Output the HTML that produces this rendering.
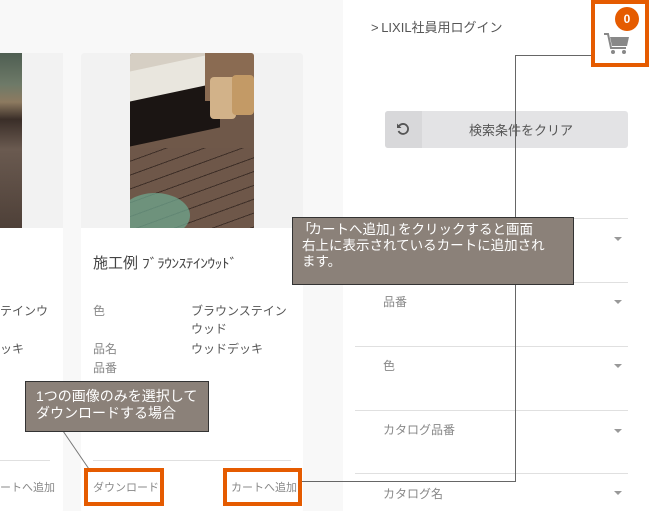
<!DOCTYPE html>
<html><head><meta charset="utf-8"><style>
*{margin:0;padding:0;box-sizing:border-box}
body{width:650px;height:511px;overflow:hidden;background:#fff;font-family:"Liberation Sans","Noto Sans CJK JP",sans-serif;position:relative;color:#555}
.abs{position:absolute}
.leftbg{left:0;top:0;width:343px;height:511px;background:#f8f8f8}
.card{background:#fff;border-radius:3px}
.imgbg{background:#f2f2f2}
.t{font-size:12px;color:#888;position:absolute;white-space:nowrap}
.v{font-size:12px;color:#555;position:absolute;white-space:nowrap}
.div{position:absolute;height:1px;background:#e0e0e0}
.arr{position:absolute;width:0;height:0;border-left:4px solid transparent;border-right:4px solid transparent;border-top:4px solid #999}
.tip{position:absolute;background:#8b8179;border:1px solid #333;color:#fff;font-size:13.5px;line-height:16px;padding:4px 0 0 9px}
.ob{position:absolute;border:4px solid #e55b00;background:transparent}
</style></head><body>
<div class="abs leftbg"></div>
<!-- card 1 -->
<div class="abs card" style="left:-10px;top:53px;width:73px;height:460px"></div>
<div class="abs imgbg" style="left:0;top:53px;width:63px;height:175px"></div>
<div class="abs" style="left:0;top:53px;width:22px;height:175px;background:linear-gradient(180deg,#4e5e52 0%,#6e7a68 18%,#8d7a60 28%,#3a2e28 38%,#6a5a50 55%,#4e4038 100%)"></div>
<div class="v" style="left:0;top:302px">テインウ</div>
<div class="v" style="left:0;top:340px">ッキ</div>
<div class="div" style="left:0;top:460px;width:50px"></div>
<div class="t" style="left:0;top:479px;font-size:11px">ートへ追加</div>
<!-- card 2 -->
<div class="abs card" style="left:81px;top:53px;width:222px;height:460px"></div>
<div class="abs imgbg" style="left:81px;top:53px;width:222px;height:175px;border-radius:3px 3px 0 0"></div>
<div class="abs" style="left:130px;top:53px;width:124px;height:175px;border-radius:3px 3px 0 0;overflow:hidden;background:#6f5849">
<div class="abs" style="left:0;top:0;width:124px;height:40px;background:#d6cfc4"></div>
<div class="abs" style="left:-10px;top:10px;width:100px;height:36px;background:#e9e6de;transform:skewY(-12deg)"></div>
<div class="abs" style="left:-10px;top:40px;width:100px;height:45px;background:#1b1513;transform:skewY(-12deg)"></div>
<div class="abs" style="left:0;top:95px;width:124px;height:80px;background:repeating-linear-gradient(160deg,#6e5749 0 12px,#3e2f28 12px 13px)"></div>
<div class="abs" style="left:75px;top:0;width:50px;height:48px;background:#8a6b52"></div>
<div class="abs" style="left:80px;top:24px;width:26px;height:42px;background:#d2b289;border-radius:4px"></div>
<div class="abs" style="left:102px;top:22px;width:22px;height:40px;background:#c39a66;border-radius:4px"></div>
<div class="abs" style="left:-10px;top:140px;width:70px;height:45px;background:#6fa58e;border-radius:50%;opacity:.75"></div>
</div>
<div class="abs" style="left:93px;top:252px;font-size:15px;color:#444;white-space:nowrap">施工例 <span style="font-size:13px;letter-spacing:-0.5px;display:inline-block;transform:scaleX(1.2);transform-origin:left">ﾌﾞﾗｳﾝｽﾃｲﾝｳｯﾄﾞ</span></div>
<div class="t" style="left:93px;top:302px">色</div>
<div class="v" style="left:191px;top:302px;line-height:18px">ブラウンステイン<br>ウッド</div>
<div class="t" style="left:93px;top:340px">品名</div>
<div class="v" style="left:191px;top:340px">ウッドデッキ</div>
<div class="t" style="left:93px;top:359px">品番</div>
<div class="div" style="left:93px;top:460px;width:198px"></div>
<div class="t" style="left:93px;top:479px;font-size:11px">ダウンロード</div>
<div class="t" style="left:231px;top:479px;font-size:11px">カートへ追加</div>
<!-- right panel -->
<div class="abs" style="left:371px;top:17px;font-size:13px;color:#555;white-space:nowrap">&gt;&thinsp;LIXIL社員用ログイン</div>
<div class="abs" style="left:385px;top:111px;width:243px;height:37px;background:#e3e3e5;border-radius:3px"></div>
<div class="abs" style="left:385px;top:111px;width:37px;height:37px;background:#d8d8da;border-radius:3px 0 0 3px"></div>
<svg class="abs" style="left:396px;top:122px" width="14" height="14" viewBox="0 0 14 14"><path d="M3 4 A5 5 0 1 1 2.5 9" fill="none" stroke="#555" stroke-width="1.8"/><path d="M1 1.5 L1 6 L5.5 6 Z" fill="#555"/></svg>
<div class="abs" style="left:469px;top:120px;font-size:13px;color:#555">検索条件をクリア</div>
<div class="div" style="left:355px;top:218px;width:273px"></div>
<div class="arr" style="left:614px;top:237px"></div>
<div class="div" style="left:355px;top:282px;width:273px"></div>
<div class="t" style="left:383px;top:293px">品番</div>
<div class="arr" style="left:614px;top:300px"></div>
<div class="div" style="left:355px;top:346px;width:273px"></div>
<div class="t" style="left:383px;top:357px">色</div>
<div class="arr" style="left:614px;top:364px"></div>
<div class="div" style="left:355px;top:410px;width:273px"></div>
<div class="t" style="left:383px;top:421px">カタログ品番</div>
<div class="arr" style="left:614px;top:429px"></div>
<div class="div" style="left:355px;top:473px;width:273px"></div>
<div class="t" style="left:383px;top:485px">カタログ名</div>
<div class="arr" style="left:614px;top:491px"></div>
<!-- cart -->
<svg class="abs" style="left:604px;top:33px" width="26" height="23" viewBox="0 0 26 23"><path d="M0 1 H4 L7 15 H22" fill="none" stroke="#888" stroke-width="2"/><path d="M6 4 H25 L23 13 H8 Z" fill="#888"/><circle cx="9" cy="19" r="2" fill="#888"/><circle cx="20" cy="19" r="2" fill="#888"/></svg>
<div class="abs" style="left:615px;top:7px;width:24px;height:24px;border-radius:50%;background:#e55b00;color:#fff;font-size:12px;font-weight:bold;text-align:center;line-height:24px">0</div>
<!-- annotation lines -->
<svg class="abs" style="left:0;top:0" width="650" height="511"><path d="M301 481.5 H515.5 V55.5 H594" fill="none" stroke="#666" stroke-width="1"/><path d="M63 431 L91 472" stroke="#777" stroke-width="1"/></svg>
<div class="ob" style="left:591px;top:0;width:58px;height:67px"></div>
<div class="ob" style="left:84px;top:468px;width:80px;height:38px"></div>
<div class="ob" style="left:223px;top:468px;width:79px;height:38px"></div>
<div class="tip" style="left:292px;top:217px;width:282px;height:68px"><span style="margin-left:-4px;margin-right:-3px">「</span>カートへ追加<span style="margin-right:-5px">」</span>をクリックすると画面<br>右上に表示されているカートに追加され<br>ます。</div>
<div class="tip" style="left:25px;top:381px;width:184px;height:51px;font-size:14px;line-height:17px;padding-top:6px;padding-left:10px">1つの画像のみを選択して<br>ダウンロードする場合</div>
</body></html>
